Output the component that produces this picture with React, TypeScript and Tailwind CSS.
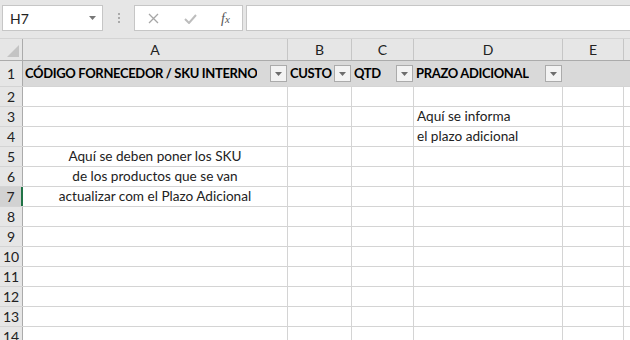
import React from 'react';

const font = { fontFamily: 'Lato, "Liberation Sans", sans-serif' };

const cols = [
  { key: 'A', w: 'w-[265px]' },
  { key: 'B', w: 'w-[64px]' },
  { key: 'C', w: 'w-[62px]' },
  { key: 'D', w: 'w-[149px]' },
  { key: 'E', w: 'w-[61px]' },
];

const headers = [
  { label: 'CÓDIGO FORNECEDOR / SKU INTERNO', w: 'w-[265px]' },
  { label: 'CUSTO', w: 'w-[64px]' },
  { label: 'QTD', w: 'w-[62px]' },
  { label: 'PRAZO ADICIONAL', w: 'w-[149px]' },
];

const aText: Record<number, string> = {
  5: 'Aquí se deben poner los SKU',
  6: 'de los productos que se van',
  7: 'actualizar com el Plazo Adicional',
};

const dText: Record<number, string> = {
  3: 'Aquí se informa',
  4: 'el plazo adicional',
};

function FilterButton() {
  return (
    <div className="w-[17px] h-[17px] border border-[#ababab] bg-[#f3f3f3] flex items-center justify-center shrink-0">
      <svg width="7" height="4" viewBox="0 0 7 4">
        <path d="M0 0h7L3.5 4z" fill="#6d6d6d" />
      </svg>
    </div>
  );
}

function Toolbar() {
  return (
    <div className="h-[39px] bg-[#e6e6e6] flex items-start pt-[5px] pl-[2px] border-b border-[#d4d4d4]">
      <div className="w-[101px] h-[26px] bg-white border border-[#c6c6c6] flex items-center justify-between pl-[7px] pr-[6px]">
        <span className="text-[14px] text-[#222]">H7</span>
        <svg width="7" height="4" viewBox="0 0 7 4">
          <path d="M0 0h7L3.5 4z" fill="#777" />
        </svg>
      </div>
      <div className="w-[31px] h-[26px] flex flex-col items-center justify-center gap-[2px]">
        <div className="w-[2px] h-[2px] bg-[#aaa]" />
        <div className="w-[2px] h-[2px] bg-[#aaa]" />
        <div className="w-[2px] h-[2px] bg-[#aaa]" />
      </div>
      <div className="w-[109px] h-[26px] bg-white border border-[#c6c6c6] flex items-center pl-[13px]">
        <svg width="11" height="11" viewBox="0 0 11 11">
          <path d="M1 1l9 9M10 1l-9 9" stroke="#a6a6a6" strokeWidth="1.3" />
        </svg>
        <svg width="13" height="11" viewBox="0 0 13 11" className="ml-[25px]">
          <path d="M1 6l4 4 7-8" stroke="#bdbdbd" strokeWidth="2" fill="none" />
        </svg>
        <span
          className="ml-[24px] text-[14px] italic text-[#555]"
          style={{ fontFamily: '"Liberation Serif", serif' }}
        >
          f<span className="text-[11px]">x</span>
        </span>
      </div>
      <div className="ml-[3px] flex-1 h-[26px] bg-white border border-[#c6c6c6] border-r-0" />
    </div>
  );
}

export default function App() {
  const rows = Array.from({ length: 13 }, (_, i) => i + 2);
  return (
    <div className="w-[630px] h-[340px] overflow-hidden bg-white text-[#222]" style={font}>
      <Toolbar />

      {/* column letters */}
      <div className="flex h-[22px] bg-[#e6e6e6] border-b border-[#ababab]">
        <div className="w-[23px] shrink-0 border-r border-[#ababab] relative">
          <svg width="12" height="12" viewBox="0 0 12 12" className="absolute right-[3px] bottom-[3px]">
            <path d="M12 0v12H0z" fill="#c4c4c4" />
          </svg>
        </div>
        {cols.map((c) => (
          <div
            key={c.key}
            className={`${c.w} shrink-0 border-r border-[#c6c6c6] flex items-center justify-center text-[14px]`}
          >
            {c.key}
          </div>
        ))}
        <div className="flex-1" />
      </div>

      {/* row 1: table header */}
      <div className="flex h-[26px] border-b border-[#d4d4d4]">
        <div className="w-[23px] shrink-0 bg-[#e6e6e6] border-r border-[#ababab] flex items-center justify-center text-[14px]">
          1
        </div>
        <div className="flex-1 flex bg-[#d9d9d9]">
          {headers.map((h) => (
            <div key={h.label} className={`${h.w} shrink-0 flex items-center justify-between pl-[2px] pr-[1px]`}>
              <span className="text-[13px] font-bold tracking-[-0.35px] text-black whitespace-nowrap overflow-hidden">
                {h.label}
              </span>
              <FilterButton />
            </div>
          ))}
        </div>
      </div>

      {rows.map((r) => (
        <div key={r} className="flex h-[20px] shrink-0 border-b border-[#d4d4d4]">
          <div
            className={
              r === 7
                ? 'w-[23px] shrink-0 bg-[#d2d2d2] border-r-2 border-[#217346] flex items-end justify-center text-[14px] leading-[19px]'
                : 'w-[23px] shrink-0 bg-[#e6e6e6] border-r border-[#ababab] flex items-end justify-center text-[14px] leading-[19px]'
            }
          >
            {r}
          </div>
          <div className="w-[265px] shrink-0 border-r border-[#d4d4d4] flex items-end justify-center text-[13.6px] leading-[19px] whitespace-nowrap">
            {aText[r] ?? ''}
          </div>
          <div className="w-[64px] shrink-0 border-r border-[#d4d4d4]" />
          <div className="w-[62px] shrink-0 border-r border-[#d4d4d4]" />
          <div className="w-[149px] shrink-0 border-r border-[#d4d4d4] flex items-end pl-[3px] text-[13.6px] leading-[19px] whitespace-nowrap">
            {dText[r] ?? ''}
          </div>
          <div className="w-[61px] shrink-0 border-r border-[#d4d4d4]" />
          <div className="flex-1" />
        </div>
      ))}
    </div>
  );
}
